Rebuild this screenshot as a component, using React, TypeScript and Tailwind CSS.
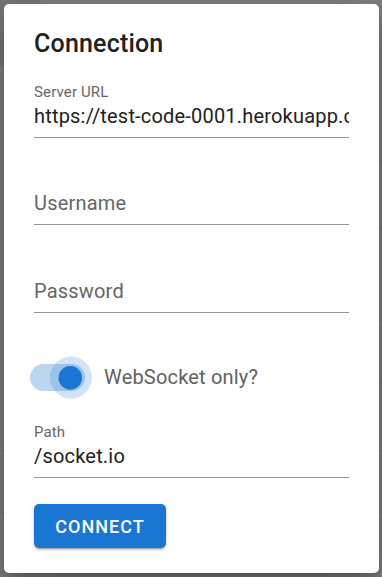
import React from "react";

function Field({
  label,
  value,
  shrink,
  className,
}: {
  label: string;
  value?: string;
  shrink: boolean;
  className?: string;
}) {
  return (
    <div className={"flex flex-col " + (className ?? "")}>
      <div className="h-[18px] text-[15px] leading-[18px] tracking-[0.14px] text-[#666666]">
        {shrink ? label : ""}
      </div>
      <div className="mt-[1px] pb-[7px] border-b border-[#949494]">
        <input
          readOnly
          value={value ?? ""}
          placeholder={shrink ? "" : label}
          className="block w-full h-[28px] p-0 m-0 bg-transparent outline-none text-[20px] leading-[28px] tracking-[0.19px] text-[#212121] placeholder:text-[#666666] placeholder:opacity-100"
          style={{ fontFamily: "Roboto, 'Liberation Sans', sans-serif" }}
        />
      </div>
    </div>
  );
}

export default function App() {
  return (
    <div
      className="relative w-[382px] h-[577px] bg-[#7f7f7f] pt-[4px] pl-[4px] overflow-hidden"
      style={{ fontFamily: "Roboto, 'Liberation Sans', sans-serif" }}
    >
      {/* faint content of the page behind the backdrop */}
      <div className="absolute left-0 top-0 w-[40px] h-[66px] bg-[#777777]" />
      <div className="absolute left-0 top-[382px] w-full h-px bg-[#747474]" />
      <div className="absolute left-0 top-[450px] w-full h-px bg-[#747474]" />
      <div className="absolute left-0 top-[512px] w-full h-px bg-[#747474]" />
      <div className="absolute right-0 top-[161px] w-[40px] h-px bg-[#747474]" />
      <div className="absolute right-0 top-[228px] w-[40px] h-px bg-[#747474]" />
      <div className="absolute right-0 top-[327px] w-[40px] h-px bg-[#747474]" />

      <div className="relative z-10 w-[375px] h-[569px] bg-white rounded-[5px] shadow-[0_11px_15px_-7px_rgba(0,0,0,0.2),0_24px_38px_3px_rgba(0,0,0,0.14),0_9px_46px_8px_rgba(0,0,0,0.12)] px-[30px] pt-[20px] flex flex-col">
        <h2 className="text-[25px] leading-[40px] font-medium text-[#212121] tracking-[0.19px]">
          Connection
        </h2>

        <Field
          className="mt-[19px]"
          label="Server URL"
          value="https://test-code-0001.herokuapp.com"
          shrink
        />
        <Field className="mt-[32px]" label="Username" shrink={false} />
        <Field className="mt-[33px]" label="Password" shrink={false} />

        <div className="mt-[40px] h-[48px] flex items-center">
          <svg
            width="62"
            height="48"
            viewBox="0 0 62 48"
            className="ml-[-4px] shrink-0"
          >
            <rect x="0" y="11" width="55" height="27" rx="13.5" fill="#1976d2" fillOpacity="0.3" />
            <circle cx="41" cy="24.5" r="21" fill="#1976d2" fillOpacity="0.2" />
            <circle cx="40.3" cy="25.2" r="11.7" fill="#000000" fillOpacity="0.12" />
            <circle cx="40.3" cy="24.7" r="11.7" fill="#1976d2" />
          </svg>
          <span className="ml-[12px] text-[20px] leading-[28px] tracking-[0.19px] text-[#616161]">
            WebSocket only?
          </span>
        </div>

        <Field className="mt-[22px]" label="Path" value="/socket.io" shrink />

        <button
          className="mt-[26px] w-[132px] h-[44px] rounded-[5px] bg-[#1976d2] text-white text-[18px] font-medium tracking-[1px] uppercase shadow-[0_3px_1px_-2px_rgba(0,0,0,0.2),0_2px_2px_0_rgba(0,0,0,0.14),0_1px_5px_0_rgba(0,0,0,0.12)] flex items-center justify-center"
        >
          Connect
        </button>
      </div>
    </div>
  );
}
